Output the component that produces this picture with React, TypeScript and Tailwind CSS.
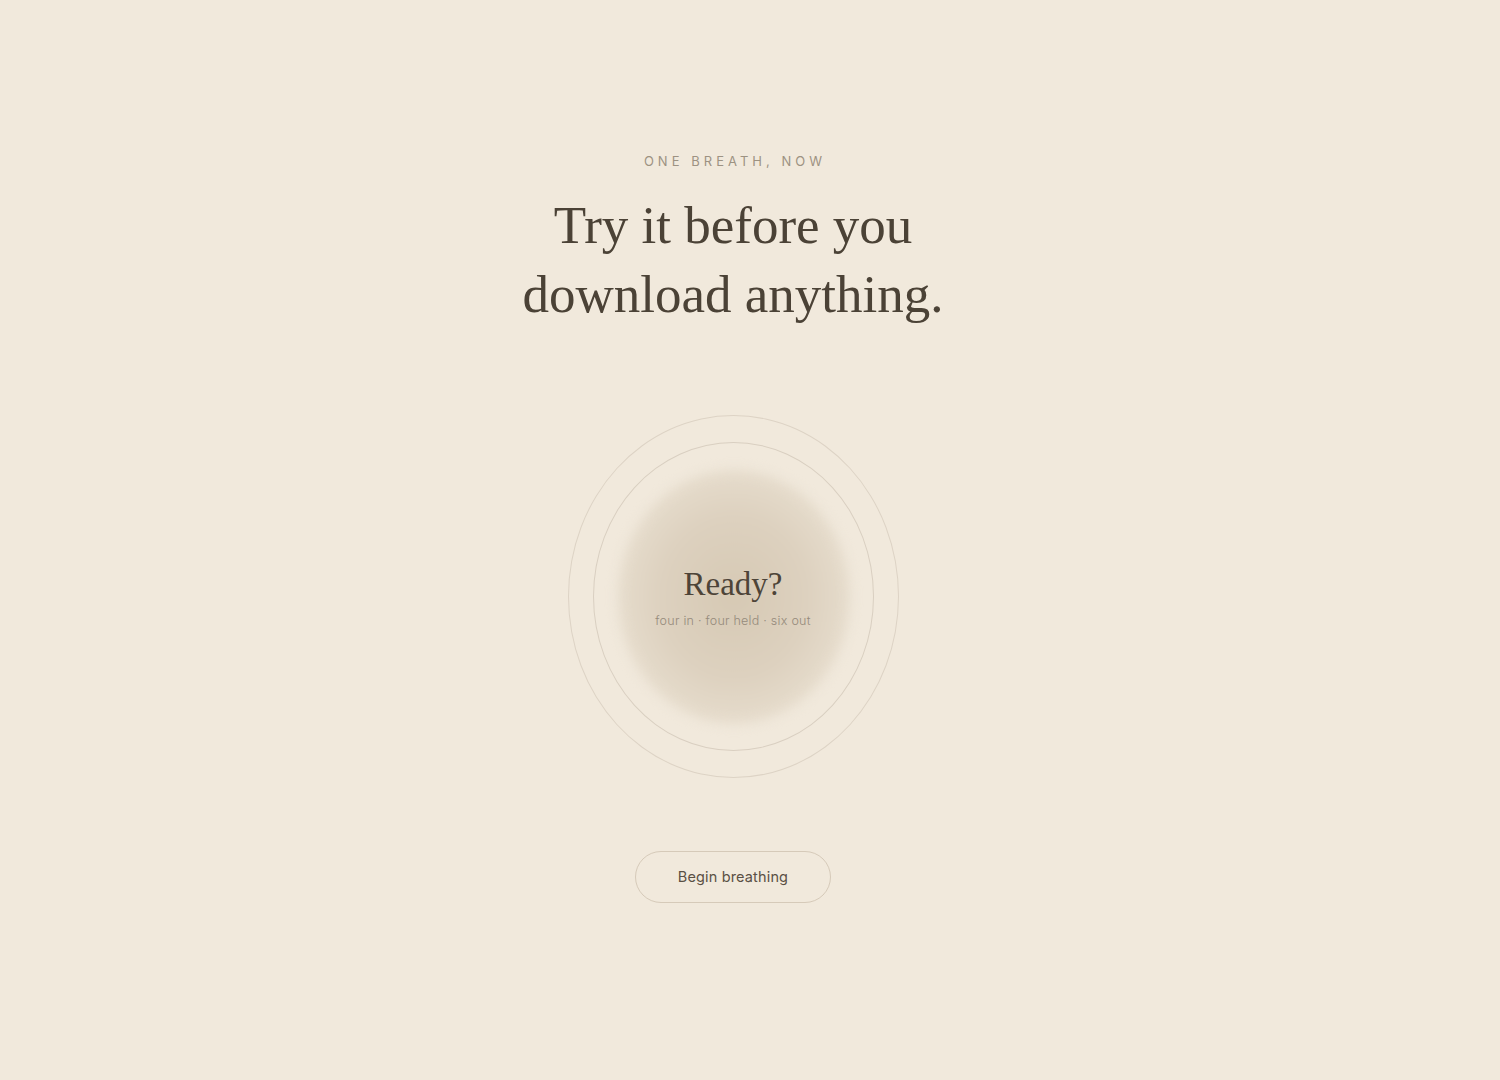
import React from "react";

export default function App() {
  return (
    <div className="min-h-[1080px] w-full bg-[#f1e9dc] pr-[34px] font-['Inter',sans-serif]">
      <div className="flex flex-col items-center pt-[153px]">
        <p className="text-[13px] leading-[16px] tracking-[0.31em] text-[#9d9282] pl-[0.31em]">
          ONE BREATH, NOW
        </p>
        <h1 className="mt-[22px] text-center font-['Liberation_Serif',serif] text-[53px] leading-[69px] font-normal text-[#4b4236]">
          Try it before you
          <br />
          download anything.
        </h1>

        {/* breathing rings */}
        <div className="mt-[86px] flex h-[363px] w-[331px] items-center justify-center rounded-[50%] border border-[#ddd3c5]">
          <div className="relative flex h-[309px] w-[281px] items-center justify-center rounded-[50%] border border-[#d9cfc1]">
            <div className="absolute left-[24px] top-[27px] h-[254px] w-[232px] rounded-[50%] bg-[radial-gradient(ellipse_at_center,#d6c9b4_0%,#ddd1bf_45%,#e9e0d1_80%,#f1e9dc_100%)] blur-[6px]" />
            <div className="relative flex flex-col items-center">
              <span className="font-['Liberation_Serif',serif] text-[33px] leading-[40px] text-[#4d4438]">
                Ready?
              </span>
              <span className="mt-[9px] text-[12.5px] font-light leading-[16px] tracking-[0.02em] text-[#958a7b]">
                four in · four held · six out
              </span>
            </div>
          </div>
        </div>

        <button
          type="button"
          className="mt-[73px] h-[52px] w-[196px] rounded-full border border-[#d6cab9] text-[14.5px] tracking-[0.01em] text-[#5a5044]"
        >
          Begin breathing
        </button>
      </div>
    </div>
  );
}
